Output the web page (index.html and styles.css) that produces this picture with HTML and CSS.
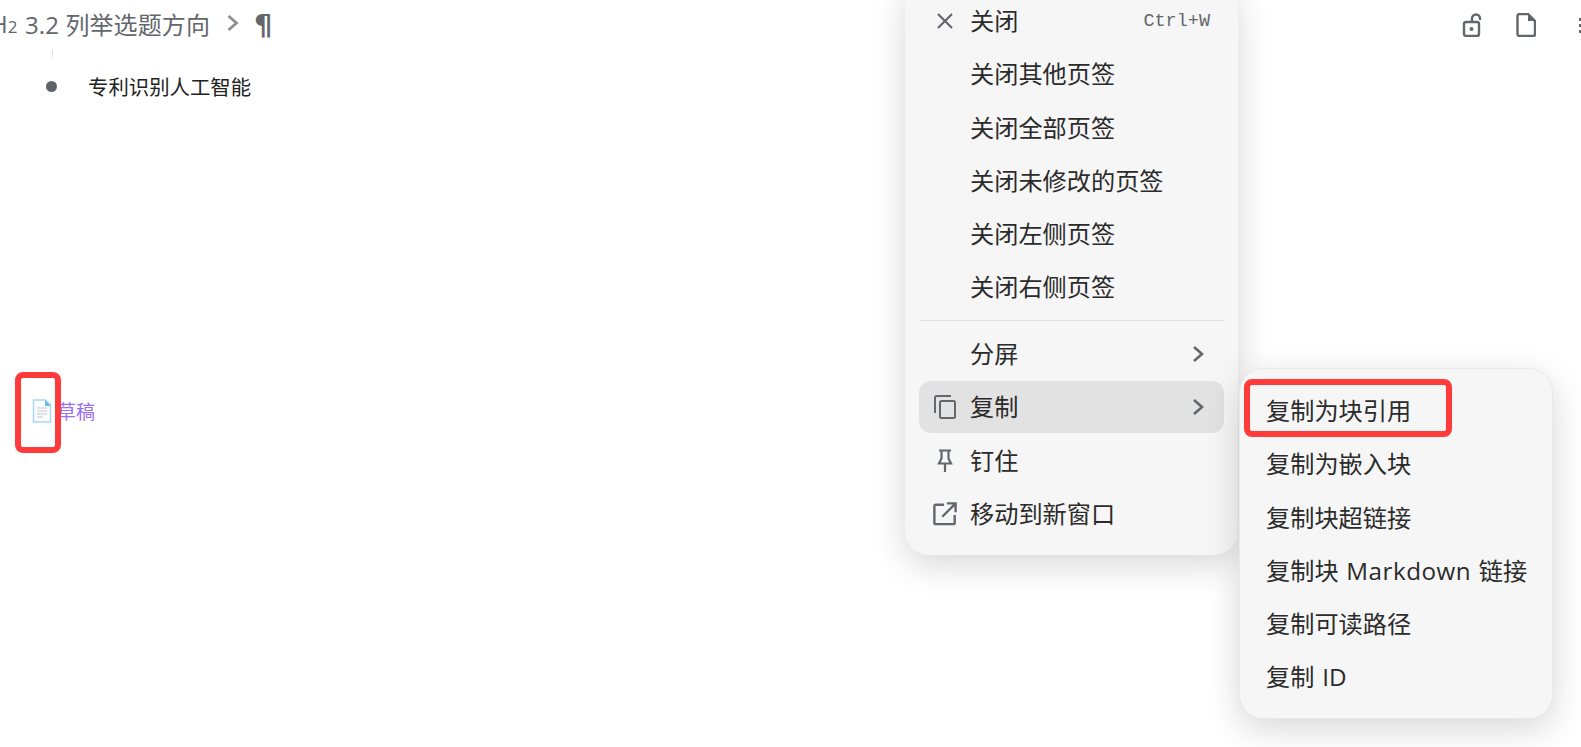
FILE: index.html
```html
<!DOCTYPE html>
<html lang="zh-CN">
<head>
    <meta charset="UTF-8">
    <title>草稿</title>
    <link rel="stylesheet" href="styles.css">
</head>
<body>

<div class="topbar">
    <div class="crumb">
        <span class="crumb-level">H<small>2</small></span>
        <span class="crumb-title">3.2 列举选题方向</span>
        <svg class="crumb-arrow" width="14" height="20" viewBox="0 0 14 20"><path d="M2.500 3l8 7-8 7" fill="none" stroke="#8b8e93" stroke-width="2.800"/></svg>
        <span class="crumb-mark">¶</span>
    </div>
    <div class="tools">
        <svg width="20" height="24" viewBox="0 0 20 24"><g fill="none" stroke="#63666b" stroke-width="2.400"><rect x="2" y="9" width="15" height="14" rx="2"/><path d="M10 9V5.500a4 4 0 0 1 8 0V7"/></g><circle cx="9.500" cy="16" r="2" fill="#63666b"/></svg>
        <svg width="20" height="24" viewBox="0 0 20 24"><path d="M3.500 1h8.500l7 7v13a2 2 0 0 1-2 2H3.500a2 2 0 0 1-2-2V3a2 2 0 0 1 2-2z" fill="none" stroke="#63666b" stroke-width="2.400"/><path d="M12 1l7 7h-7z" fill="#63666b"/></svg>
        <div class="kebab"><i></i><i></i><i></i></div>
    </div>
</div>

<div class="doc">
    <div class="tick"></div>
    <div class="bullet-row">
        <span class="dot"></span>
        <span>专利识别人工智能</span>
    </div>
    <div class="draft-row">
        <svg width="20" height="24" viewBox="0 0 20 24">
            <path d="M1.500 1h12l5 5v17h-17z" fill="#fbfdfe" stroke="#a9d9f2" stroke-width="1.500"/>
            <path d="M13 1l6 6h-6z" fill="#6cbcec"/>
            <path d="M5 9h10M5 12h10M5 15h10M5 18h6" stroke="#c3c9cc" stroke-width="1.200"/>
        </svg>
        <span class="draft-link">草稿</span>
    </div>
</div>

<div class="menu menu-main">
    <div class="menu-item">
        <span class="menu-icon"><svg width="18" height="18" viewBox="0 0 18 18"><path d="M2 2l14 14M16 2L2 16" stroke="#63666b" stroke-width="2.200" fill="none"/></svg></span>
        <span class="menu-label">关闭</span>
        <span class="shortcut">Ctrl+W</span>
    </div>
    <div class="menu-item"><span class="menu-icon"></span><span class="menu-label">关闭其他页签</span></div>
    <div class="menu-item"><span class="menu-icon"></span><span class="menu-label">关闭全部页签</span></div>
    <div class="menu-item"><span class="menu-icon"></span><span class="menu-label">关闭未修改的页签</span></div>
    <div class="menu-item"><span class="menu-icon"></span><span class="menu-label">关闭左侧页签</span></div>
    <div class="menu-item"><span class="menu-icon"></span><span class="menu-label">关闭右侧页签</span></div>
    <div class="menu-sep"></div>
    <div class="menu-item">
        <span class="menu-icon"></span>
        <span class="menu-label">分屏</span>
        <svg class="chevron" width="12" height="18" viewBox="0 0 12 18"><path d="M2 2l8 7-8 7" fill="none" stroke="#63666b" stroke-width="2.600"/></svg>
    </div>
    <div class="menu-item active">
        <span class="menu-icon"><svg width="24" height="24" viewBox="0 0 24 24"><g fill="none" stroke="#63666b" stroke-width="2"><rect x="7" y="6" width="15" height="17" rx="1.500"/><path d="M2 18V3a2 2 0 0 1 2-2h14"/></g></svg></span>
        <span class="menu-label">复制</span>
        <svg class="chevron" width="12" height="18" viewBox="0 0 12 18"><path d="M2 2l8 7-8 7" fill="none" stroke="#63666b" stroke-width="2.600"/></svg>
    </div>
    <div class="menu-item">
        <span class="menu-icon"><svg width="16" height="24" viewBox="0 0 16 24"><path d="M2 1.500h12M4.500 2v7.500L2 14.500h12l-2.500-5V2M8 15v8" fill="none" stroke="#63666b" stroke-width="2.200"/></svg></span>
        <span class="menu-label">钉住</span>
    </div>
    <div class="menu-item">
        <span class="menu-icon"><svg width="26" height="26" viewBox="0 0 26 26"><path d="M12 3H3a1.500 1.500 0 0 0-1.500 1.500v18A1.500 1.500 0 0 0 3 24h19a1.500 1.500 0 0 0 1.500-1.500V14M10 16L24 2M15 1.500h9.500V11" fill="none" stroke="#63666b" stroke-width="2.600"/></svg></span>
        <span class="menu-label">移动到新窗口</span>
    </div>
</div>

<div class="menu menu-sub">
    <div class="menu-item"><span class="menu-label">复制为块引用</span></div>
    <div class="menu-item"><span class="menu-label">复制为嵌入块</span></div>
    <div class="menu-item"><span class="menu-label">复制块超链接</span></div>
    <div class="menu-item"><span class="menu-label">复制块 <span class="latin">Markdown</span> 链接</span></div>
    <div class="menu-item"><span class="menu-label">复制可读路径</span></div>
    <div class="menu-item"><span class="menu-label">复制 ID</span></div>
</div>

<!-- red marks drawn over the screenshot -->
<div class="mark mark-icon"></div>
<div class="mark mark-item"></div>

</body>
</html>
```

FILE: styles.css
```css
html, body {
    height: 100%;
}
body {
    margin: 0;
    position: relative;
    overflow: hidden;
    background-color: #fff;
    color: #2b2b2b;
    font-family: "Open Sans", "Noto Sans CJK SC", sans-serif;
}

/* top bar */
.topbar {
    display: flex;
    align-items: center;
    justify-content: space-between;
    height: 50px;
}
.crumb {
    display: flex;
    align-items: center;
    margin-left: -10px;
    padding-bottom: 4px;
    font-size: 24px;
    color: #63666b;
    white-space: nowrap;
}
.crumb-level {
    width: 35px;
    font-size: 24px;
}
.crumb-level small {
    font-size: 17px;
}
.crumb-title {
    letter-spacing: 0.100px;
}
.crumb-arrow {
    margin-left: 16px;
}
.crumb-mark {
    margin: 3px 0 0 14px;
    font-size: 29px;
    line-height: 34px;
    font-weight: bold;
    font-family: "DejaVu Sans", sans-serif;
}
.tools {
    display: flex;
    align-items: center;
    gap: 34px;
    margin-right: -1px;
}
.kebab {
    display: flex;
    flex-direction: column;
    gap: 3px;
    margin-left: 9px;
}
.kebab i {
    display: block;
    width: 3px;
    height: 3px;
    background-color: #63666b;
}

/* document */
.tick {
    width: 1px;
    height: 7px;
    margin-left: 52px;
    background-color: #ddd;
}
.bullet-row {
    display: flex;
    align-items: center;
    margin: 14px 0 0 46px;
    height: 30px;
    font-size: 20.400px;
    color: #222;
}
.dot {
    width: 11px;
    height: 11px;
    margin-right: 31px;
    border-radius: 50%;
    background-color: #5f6368;
}
.draft-row {
    display: flex;
    align-items: center;
    gap: 5px;
    margin: 296px 0 0 32px;
}
.draft-link {
    font-size: 19px;
    color: #9a6ff0;
}

/* context menus */
.menu {
    position: absolute;
    box-sizing: border-box;
    display: flex;
    flex-direction: column;
    gap: 1.300px;
    border-radius: 24px;
    background-color: #f6f6f6;
    box-shadow: 0 10px 34px rgba(0, 0, 0, 0.16);
}
.menu-main {
    left: 905px;
    top: -19px;
    width: 333px;
    height: 574px;
    padding: 14px;
}
.menu-sub {
    left: 1239px;
    top: 368px;
    width: 314px;
    height: 351px;
    padding: 16px 14px;
    border: 1px solid #e9e9e9;
}
.menu-sub .menu-item {
    padding: 0 12px;
}
.menu-sub .menu-label {
    word-spacing: 1.500px;
}
.latin {
    letter-spacing: 0.500px;
}
.menu-item {
    display: flex;
    flex: none;
    align-items: center;
    height: 52px;
    padding: 0 14px;
    border-radius: 12px;
    font-size: 24.200px;
    white-space: nowrap;
}
.menu-item.active {
    background-color: #e2e2e2;
}
.menu-icon {
    display: flex;
    flex: none;
    align-items: center;
    justify-content: center;
    width: 24px;
    height: 26px;
    margin-right: 13px;
}
.menu-label {
    flex: 1;
    margin-bottom: 3px;
}
.menu-sep {
    height: 1px;
    margin: 5px 0 6px;
    background-color: #e2e2e2;
}
.shortcut {
    font-family: "Liberation Mono", monospace;
    font-size: 18.500px;
    color: #63666b;
}
.chevron {
    margin-right: 6px;
}

/* annotations */
.mark {
    position: absolute;
    box-sizing: border-box;
    border: 6px solid #ff3b3b;
    border-radius: 8px;
}
.mark-icon {
    left: 15px;
    top: 372px;
    width: 46px;
    height: 81px;
}
.mark-item {
    left: 1244px;
    top: 379px;
    width: 208px;
    height: 58px;
}
```
